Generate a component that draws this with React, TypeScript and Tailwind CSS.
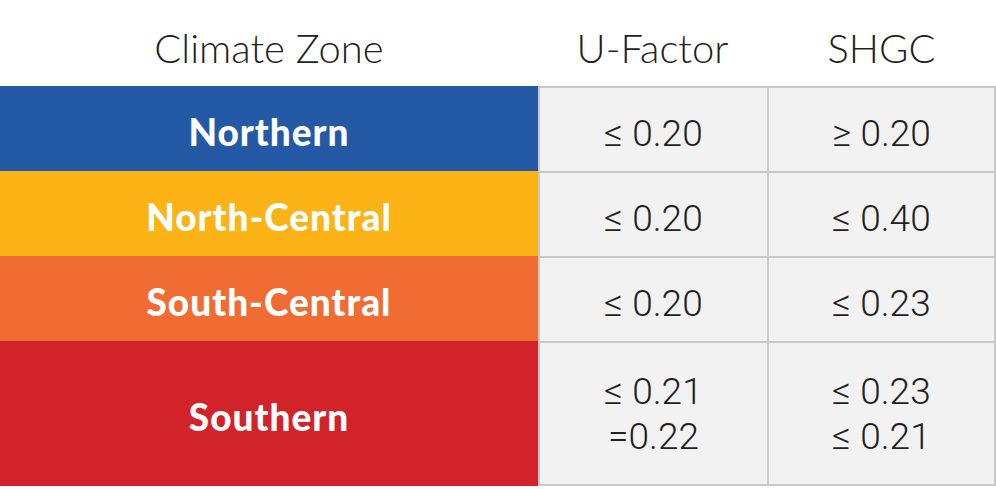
import React from "react";

type Row = { name: string; bg: string; u: string[]; s: string[]; h: string };

const rows: Row[] = [
  { name: "Northern", bg: "bg-[#2359a5]", u: ["≤ 0.20"], s: ["≥ 0.20"], h: "h-[85px]" },
  { name: "North-Central", bg: "bg-[#fbb316]", u: ["≤ 0.20"], s: ["≤ 0.40"], h: "h-[85px]" },
  { name: "South-Central", bg: "bg-[#f06c33]", u: ["≤ 0.20"], s: ["≤ 0.23"], h: "h-[85px]" },
  { name: "Southern", bg: "bg-[#d2232b]", u: ["≤ 0.21", "=0.22"], s: ["≤ 0.23", "≤ 0.21"], h: "h-[145px]" },
];

const headFont = { fontFamily: "Lato, 'Open Sans', sans-serif" };
const numFont = { fontFamily: "Roboto, 'Liberation Sans', sans-serif" };

export default function App() {
  return (
    <div className="w-[996px] h-[489px] bg-white overflow-hidden">
      <div
        className="flex h-[86px] items-center text-[40px] font-light text-[#231f20] pt-[10px]"
        style={headFont}
      >
        <div className="w-[538px] text-center">Climate Zone</div>
        <div className="w-[229px] text-center">U-Factor</div>
        <div className="w-[229px] text-center">SHGC</div>
      </div>
      {rows.map((r, i) => {
        const last = i === rows.length - 1;
        const cell =
          "w-[229px] bg-[#f2f2f2] border-t-2 border-l-2 border-[#c9c9c9] flex flex-col items-center justify-center text-[37px] font-light text-[#231f20] leading-[45px] " +
          (last ? "border-b-2 pt-[0px] " : "pt-[8px] ");
        return (
          <div key={r.name} className={"flex " + r.h}>
            <div
              className={
                "w-[538px] flex items-center justify-center text-white text-[37px] font-black tracking-[1px] pt-[6px] " +
                r.bg
              }
              style={headFont}
            >
              {r.name}
            </div>
            <div className={cell} style={numFont}>
              {r.u.map((t) => (
                <div key={t}>{t}</div>
              ))}
            </div>
            <div className={cell + " border-r-2"} style={numFont}>
              {r.s.map((t) => (
                <div key={t}>{t}</div>
              ))}
            </div>
          </div>
        );
      })}
    </div>
  );
}
